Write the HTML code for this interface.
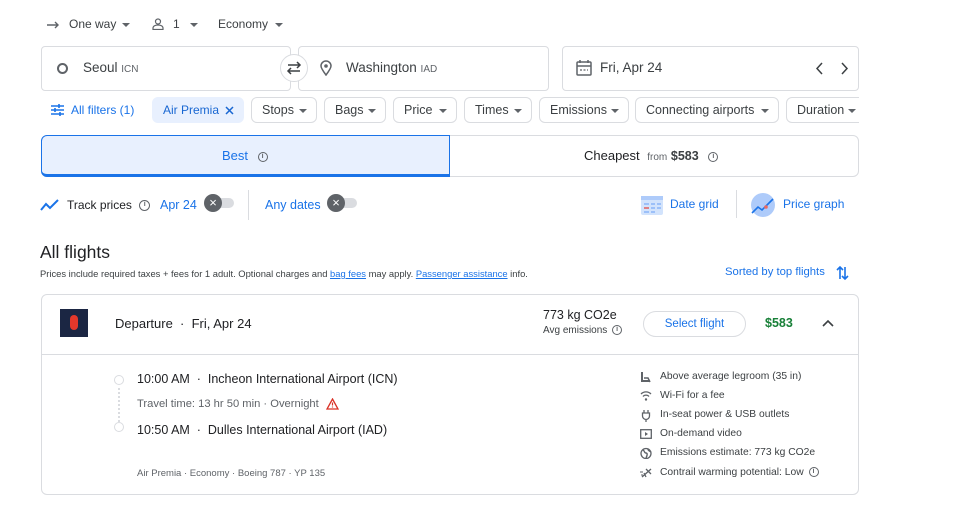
<!DOCTYPE html>
<html><head><meta charset="utf-8">
<style>
*{box-sizing:border-box;margin:0;padding:0}
body{width:957px;height:532px;background:#fff;font-family:"Liberation Sans",Arial,sans-serif;color:#202124;position:relative;overflow:hidden}
.a{position:absolute;white-space:nowrap}
.caret{display:inline-block;width:0;height:0;border-left:4px solid transparent;border-right:4px solid transparent;border-top:4px solid #5f6368;vertical-align:middle}
.box{position:absolute;border:1px solid #dadce0;border-radius:4px;background:#fff}
.chip{position:absolute;top:97px;height:26px;border:1px solid #dadce0;border-radius:6px;font-size:12.5px;color:#3c4043;line-height:24px;padding-left:10px}
.chip .caret{position:absolute;right:9px;top:11px}
.blue{color:#1a73e8}
.info{display:inline-block;width:10px;height:10px;border:1px solid #5f6368;border-radius:50%;font-size:7px;line-height:8px;text-align:center;color:#5f6368;vertical-align:middle;font-weight:bold}
.tog{position:absolute;width:26px;height:10px;border-radius:5px;background:#dadce0}
.tog b{position:absolute;left:-4px;top:-4px;width:18px;height:18px;border-radius:50%;background:#5f6368;color:#fff;font-size:13px;line-height:18px;text-align:center;font-weight:normal}
.am{position:absolute;left:640px;font-size:10.3px;color:#3c4043;height:14px}
.am svg{position:absolute;left:0;top:0}
.am>span{position:absolute;left:20px;top:0;white-space:nowrap}
</style></head><body>

<svg class="a" style="left:47px;top:20px" width="14" height="10"><path d="M0 5h11M8 2l3 3-3 3" stroke="#5f6368" stroke-width="1.4" fill="none"/></svg>
<div class="a" style="left:69px;top:17px;font-size:12px;color:#3c4043">One way</div>
<span class="caret a" style="left:122px;top:23px"></span>
<svg class="a" style="left:152px;top:18px" width="12" height="12"><circle cx="6" cy="3.5" r="2.5" stroke="#5f6368" stroke-width="1.2" fill="none"/><path d="M1 11.5v-1.5c0-2 2.5-3 5-3s5 1 5 3v1.5z" stroke="#5f6368" stroke-width="1.2" fill="none"/></svg>
<div class="a" style="left:173px;top:17px;font-size:12px;color:#3c4043">1</div>
<span class="caret a" style="left:190px;top:23px"></span>
<div class="a" style="left:218px;top:17px;font-size:12px;color:#3c4043">Economy</div>
<span class="caret a" style="left:275px;top:23px"></span>

<div class="box" style="left:41px;top:46px;width:250px;height:45px"></div>
<div class="box" style="left:298px;top:46px;width:251px;height:45px"></div>
<div class="a" style="left:280px;top:54px;width:28px;height:28px;border-radius:50%;background:#fff;border:1px solid #dadce0"></div>
<svg class="a" style="left:285px;top:60px" width="18" height="16"><path d="M3 5h12M12 2l3 3-3 3M15 11H3M6 8l-3 3 3 3" stroke="#3c4043" stroke-width="1.5" fill="none"/></svg>
<div class="a" style="left:57px;top:63px;width:11px;height:11px;border:2px solid #5f6368;border-radius:50%"></div>
<div class="a" style="left:83px;top:60px;font-size:13.5px;color:#3c4043">Seoul <span style="font-size:10px;color:#5f6368">ICN</span></div>
<svg class="a" style="left:320px;top:60px" width="12" height="16"><path d="M6 15C3 11 1 8 1 6a5 5 0 0 1 10 0c0 2-2 5-5 9z" stroke="#5f6368" stroke-width="1.5" fill="none"/><circle cx="6" cy="6" r="1.8" fill="#5f6368"/></svg>
<div class="a" style="left:346px;top:60px;font-size:13.5px;color:#3c4043">Washington <span style="font-size:10px;color:#5f6368">IAD</span></div>
<div class="box" style="left:562px;top:46px;width:297px;height:45px"></div>
<svg class="a" style="left:576px;top:59px" width="16" height="17"><rect x="1" y="3" width="14" height="13" rx="1" stroke="#5f6368" stroke-width="1.5" fill="none"/><path d="M1 7h14M4 1v3M12 1v3" stroke="#5f6368" stroke-width="1.5"/><path d="M4 11h2M7.5 11h2M11 11h1" stroke="#5f6368" stroke-width="1.2"/></svg>
<div class="a" style="left:600px;top:60px;font-size:13.5px;color:#3c4043">Fri, Apr 24</div>
<svg class="a" style="left:814px;top:62px" width="36" height="13"><path d="M8 1L3 6.5 8 12M28 1l5 5.5-5 5.5" stroke="#3c4043" stroke-width="1.5" fill="none"/></svg>

<svg class="a" style="left:51px;top:104px" width="13" height="12"><path d="M0 2h13M0 6h13M0 10h13" stroke="#1a73e8" stroke-width="1.4"/><path d="M8 0v4M4 4v4M9 8v4" stroke="#1a73e8" stroke-width="1.6"/></svg>
<div class="a blue" style="left:71px;top:103px;font-size:12px">All filters (1)</div>
<div class="chip" style="left:152px;width:92px;background:#e8f0fe;border-color:#e8f0fe;color:#1967d2;font-size:12px">Air Premia <svg style="position:absolute;right:9px;top:8px" width="9" height="9"><path d="M1 1l7 7M8 1L1 8" stroke="#1967d2" stroke-width="1.5"/></svg></div>
<div class="chip" style="left:251px;width:66px">Stops<span class="caret"></span></div>
<div class="chip" style="left:324px;width:62px">Bags<span class="caret"></span></div>
<div class="chip" style="left:393px;width:64px">Price<span class="caret"></span></div>
<div class="chip" style="left:464px;width:68px">Times<span class="caret"></span></div>
<div class="chip" style="left:539px;width:90px">Emissions<span class="caret"></span></div>
<div class="chip" style="left:635px;width:144px">Connecting airports<span class="caret"></span></div>
<div class="chip" style="left:786px;width:80px">Duration<span class="caret"></span></div>
<div class="a" style="left:859px;top:95px;width:100px;height:30px;background:#fff"></div>

<div class="a" style="left:41px;top:135px;width:818px;height:42px;border:1px solid #dadce0;border-radius:6px"></div>
<div class="a" style="left:41px;top:135px;width:409px;height:42px;background:#e8f0fe;border:1px solid #1a73e8;border-bottom:3px solid #1a73e8;border-radius:6px 0 0 6px"></div>
<div class="a blue" style="left:222px;top:148px;font-size:13px">Best <span class="info" style="margin-left:6px">i</span></div>
<div class="a" style="left:584px;top:148px;font-size:13px;color:#202124">Cheapest <span style="font-size:10px;color:#5f6368;margin-left:4px">from</span> <b style="font-size:12.5px;color:#3c4043">$583</b> <span class="info" style="margin-left:6px">i</span></div>

<svg class="a" style="left:40px;top:198px" width="19" height="14"><path d="M1 12l5-6 4 4 8-8" stroke="#1a73e8" stroke-width="2" fill="none"/></svg>
<div class="a" style="left:67px;top:198px;font-size:12px;color:#202124">Track prices <span class="info" style="margin-left:4px;width:11px;height:11px">i</span></div>
<div class="a blue" style="left:160px;top:198px;font-size:12.5px">Apr 24</div>
<div class="tog" style="left:208px;top:198px"><b>×</b></div>
<div class="a" style="left:248px;top:190px;width:1px;height:30px;background:#dadce0"></div>
<div class="a blue" style="left:265px;top:198px;font-size:12.5px">Any dates</div>
<div class="tog" style="left:331px;top:198px"><b>×</b></div>
<svg class="a" style="left:641px;top:193px" width="22" height="23"><rect x="0" y="3" width="22" height="19" rx="2" fill="#d2e3fc"/><rect x="0" y="3" width="22" height="4" fill="#aecbfa"/><path d="M3 11h5M10 11h4M16 11h4M3 15h5M10 15h4M16 15h4M3 19h5M10 19h4" stroke="#8ab4f8" stroke-width="1.5"/><path d="M3 15h5" stroke="#ee675c" stroke-width="1.5"/></svg>
<div class="a blue" style="left:670px;top:197px;font-size:12px">Date grid</div>
<div class="a" style="left:736px;top:190px;width:1px;height:28px;background:#dadce0"></div>
<svg class="a" style="left:751px;top:192px" width="26" height="26"><circle cx="12" cy="13" r="12" fill="#aecbfa"/><path d="M1 21l6-6 4 3 6-6 5-5" stroke="#1a73e8" stroke-width="1.6" fill="none"/><circle cx="15" cy="15" r="1.8" fill="#ee675c"/></svg>
<div class="a blue" style="left:783px;top:197px;font-size:12px">Price graph</div>

<div class="a" style="left:40px;top:242px;font-size:17.5px;color:#202124">All flights</div>
<div class="a" style="left:40px;top:268px;font-size:9.4px;color:#3c4043">Prices include required taxes + fees for 1 adult. Optional charges and <u class="blue">bag fees</u> may apply. <u class="blue">Passenger assistance</u> info.</div>
<div class="a blue" style="left:725px;top:266px;font-size:11.3px">Sorted by top flights</div>
<svg class="a" style="left:836px;top:265px" width="13" height="16"><path d="M4 14V2M1 5l3-3 3 3M9 2v12M6 11l3 3 3-3" stroke="#1a73e8" stroke-width="1.6" fill="none"/></svg>

<div class="a" style="left:41px;top:294px;width:818px;height:201px;border:1px solid #dadce0;border-radius:6px"></div>
<div class="a" style="left:41px;top:354px;width:818px;height:1px;background:#dadce0"></div>
<div class="a" style="left:60px;top:309px;width:28px;height:28px;background:#1b2643"></div>
<div class="a" style="left:70px;top:315px;width:8px;height:15px;background:#e4382b;border-radius:4px"></div>
<div class="a" style="left:115px;top:316px;font-size:13px;color:#202124">Departure &nbsp;·&nbsp; Fri, Apr 24</div>
<div class="a" style="left:543px;top:308px;font-size:12.5px;color:#202124">773 kg CO2e</div>
<div class="a" style="left:543px;top:325px;font-size:10px;color:#3c4043">Avg emissions <span class="info" style="margin-left:2px">i</span></div>
<div class="a" style="left:643px;top:311px;width:103px;height:26px;border:1px solid #dadce0;border-radius:13px;font-size:11.5px;line-height:24px;text-align:center;color:#1a73e8">Select flight</div>
<div class="a" style="left:765px;top:316px;font-size:12.5px;font-weight:bold;color:#188038">$583</div>
<svg class="a" style="left:822px;top:319px" width="12" height="8"><path d="M1 7l5-5 5 5" stroke="#3c4043" stroke-width="1.6" fill="none"/></svg>

<div class="a" style="left:114px;top:375px;width:10px;height:10px;border:1px solid #dadce0;border-radius:50%"></div>
<div class="a" style="left:118px;top:388px;width:0;height:34px;border-left:2px dotted #dadce0"></div>
<div class="a" style="left:114px;top:422px;width:10px;height:10px;border:1px solid #dadce0;border-radius:50%"></div>
<div class="a" style="left:137px;top:372px;font-size:12.5px;color:#202124">10:00 AM &nbsp;·&nbsp; Incheon International Airport (ICN)</div>
<div class="a" style="left:137px;top:398px;font-size:11.2px;color:#5f6368">Travel time: 13 hr 50 min · Overnight</div>
<svg class="a" style="left:326px;top:398px" width="13" height="12"><path d="M6.5 1L12 11H1z" stroke="#d93025" stroke-width="1.3" fill="none"/><path d="M6.5 4.5v3M6.5 8.5v1" stroke="#d93025" stroke-width="1.2"/></svg>
<div class="a" style="left:137px;top:423px;font-size:12.5px;color:#202124">10:50 AM &nbsp;·&nbsp; Dulles International Airport (IAD)</div>
<div class="a" style="left:137px;top:468px;font-size:9.5px;color:#5f6368">Air Premia · Economy · Boeing 787 · YP 135</div>

<div class="am" style="top:371px"><svg width="12" height="12"><path d="M2 1v9h8" stroke="#5f6368" stroke-width="2" fill="none"/><path d="M4 7h4l2 4" stroke="#5f6368" stroke-width="1.5" fill="none"/></svg><span>Above average legroom (35 in)</span></div>
<div class="am" style="top:390px"><svg width="12" height="12"><path d="M1 4a7 7 0 0 1 10 0M3 6.5a4 4 0 0 1 6 0" stroke="#5f6368" stroke-width="1.3" fill="none"/><circle cx="6" cy="9.5" r="1.2" fill="#5f6368"/></svg><span>Wi-Fi for a fee</span></div>
<div class="am" style="top:409px"><svg width="12" height="13"><path d="M4 1v3M8 1v3M2.5 4h7v3a3.5 3.5 0 0 1-7 0zM6 10.5V13" stroke="#5f6368" stroke-width="1.3" fill="none"/></svg><span>In-seat power &amp; USB outlets</span></div>
<div class="am" style="top:428px"><svg width="12" height="12"><rect x="0.7" y="1.7" width="10.6" height="8.6" stroke="#5f6368" stroke-width="1.3" fill="none"/><path d="M5 4v4l3-2z" fill="#5f6368"/></svg><span>On-demand video</span></div>
<div class="am" style="top:447px"><svg width="12" height="12"><circle cx="6" cy="6.5" r="5" stroke="#5f6368" stroke-width="1.3" fill="none"/><path d="M3 3c2 1 1 3 3 3s1 3 0 5M8 2c0 2 2 2 3 3" stroke="#5f6368" stroke-width="1.4" fill="none"/></svg><span>Emissions estimate: 773 kg CO2e</span></div>
<div class="am" style="top:467px"><svg width="13" height="12"><path d="M2 10l9-8M6 2l5 5M4 6l2 4" stroke="#5f6368" stroke-width="1.3" fill="none"/><path d="M0 5h3M1 8h2" stroke="#5f6368" stroke-width="1"/></svg><span>Contrail warming potential: Low <span class="info" style="margin-left:2px">i</span></span></div>
</body></html>
